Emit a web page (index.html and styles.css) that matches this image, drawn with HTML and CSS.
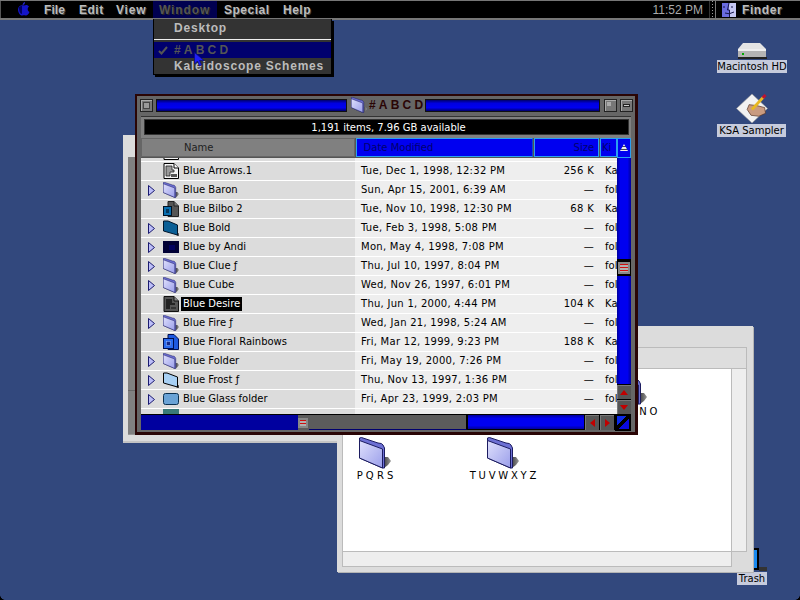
FILE: index.html
```html
<!DOCTYPE html>
<html lang="en">
<head>
<meta charset="utf-8">
<title>Mac OS Desktop</title>
<link rel="stylesheet" href="styles.css">
</head>
<body>
<svg class="defs" width="0" height="0" aria-hidden="true">
  <defs>
    <linearGradient id="fg" x1="0" y1="0" x2="1" y2="1"><stop offset="0" stop-color="#dfe0fc"/><stop offset="1" stop-color="#9a9eea"/></linearGradient>
    <linearGradient id="fs" x1="0" y1="0" x2="1" y2="0"><stop offset="0" stop-color="#444"/><stop offset="1" stop-color="#999"/></linearGradient>
    <symbol id="folder" viewBox="0 0 32 32">
      <path d="M25 20 H29 L32 24 L29 28 L25 31Z" fill="url(#fs)"/>
      <path d="M.5 1 L2.500 .5 L19 6 Q23 6 24 8 L25.500 11 V31 H23.500 L.5 21Z" fill="#6d70d4" stroke="#1c1c60"/>
      <path d="M.5 3.500 L23.500 12 V31 L.5 21Z" fill="url(#fg)" stroke="#1c1c60"/>
    </symbol>
    <symbol id="doc-light" viewBox="0 0 16 16">
      <path d="M1 .5H11L15.500 5V15.500H1Z" fill="#f4f4f4" stroke="#000"/>
      <path d="M11 .5V5H15.500" fill="#fff" stroke="#000"/>
      <path d="M3 3H9V7H11V9H7V13H3Z" fill="#9a9a9a" stroke="#222" stroke-width=".8"/>
      <path d="M8 11H14V14H8Z" fill="#555"/>
    </symbol>
    <symbol id="doc-dark" viewBox="0 0 16 16">
      <path d="M1 .5H11L15.500 5V15.500H1Z" fill="#555" stroke="#111"/>
      <path d="M11 .5V5H15.500" fill="#888" stroke="#111"/>
      <path d="M3 3H9V7H12V9H7V13H3Z" fill="#222"/>
      <path d="M8 11H13V13H8Z" fill="#333"/>
    </symbol>
    <symbol id="doc-gray-blue" viewBox="0 0 16 16">
      <path d="M5 .5H11L15.500 5V15.500H5Z" fill="#555" stroke="#222"/>
      <path d="M11 .5V5H15.500" fill="#777" stroke="#222"/>
      <rect x=".5" y="5.500" width="8" height="9" fill="#0a6fb0" stroke="#012"/>
      <rect x="3" y="8" width="3" height="4" fill="#06385e"/>
    </symbol>
    <symbol id="doc-blue" viewBox="0 0 16 16">
      <path d="M5 .5H11L15.500 5V15.500H5Z" fill="#1e5ae0" stroke="#001050"/>
      <rect x=".5" y="4.500" width="10" height="10" fill="#2b6cf0" stroke="#001050"/>
      <rect x="3.500" y="7.500" width="4" height="4" fill="#14298a" stroke="#9bbcff" stroke-width=".5"/>
    </symbol>
    <symbol id="folder-teal" viewBox="0 0 16 16">
      <path d="M13 14 L16 13 V16 H14Z" fill="#555"/>
      <path d="M.5 1 H5 L14.500 5 V15 L.5 11Z" fill="#0a5f96" stroke="#00152a"/>
    </symbol>
    <symbol id="folder-navy" viewBox="0 0 16 16">
      <rect y="2" width="16" height="12" fill="#000035"/>
      <rect x="6" y="6" width="6" height="5" fill="#000060"/>
    </symbol>
    <symbol id="folder-frost" viewBox="0 0 16 16">
      <path d="M13 14 L16 13 V16 H14Z" fill="#444"/>
      <path d="M.5 1 H4 L14.500 5 V15 L.5 11Z" fill="#a8d0f4" stroke="#000"/>
    </symbol>
    <symbol id="folder-glass" viewBox="0 0 16 16">
      <rect x=".5" y="2.500" width="15" height="11" rx="2" fill="#6aa3d6" stroke="#0a3050"/>
    </symbol>
    <symbol id="tri" viewBox="0 0 7 11">
      <path d="M.5 .5 L6.500 5.500 L.5 10.500Z" fill="#bcbef8" stroke="#1a1a70"/>
    </symbol>
  </defs>
</svg>

<div class="desktop">

  <header class="menubar">
    <svg class="apple" width="16" height="16" viewBox="0 0 16 16" aria-hidden="true">
      <path d="M9 1 C9 3 8 4 6.500 4 C7 2 8 1 9 1Z" fill="#2a2ad8"/>
      <path d="M8 4.500 C10 3.500 12 4 13 5.500 C11 7 11.500 10 13.500 11 C12.500 13.500 11 15 9.500 14.500 C8.500 14 7.500 14 6.500 14.500 C4.500 15 2 12 2 8.500 C2 5 5.500 3.500 8 4.500Z" fill="#1414c8"/>
      <path d="M3 6 C4 5 5 5 6 5 V13 C4 13 3 10 3 6Z" fill="#000060"/>
    </svg>
    <nav class="menus">
      <span class="menu">File</span>
      <span class="menu">Edit</span>
      <span class="menu">View</span>
      <span class="menu is-open">Window</span>
      <span class="menu">Special</span>
      <span class="menu">Help</span>
    </nav>
    <div class="status">
      <span class="clock">11:52 PM</span>
      <span class="grip"></span>
      <svg class="finder-icon" width="14" height="14" viewBox="0 0 14 14" aria-hidden="true">
        <rect width="14" height="14" fill="#6a6ce0"/>
        <rect x="7" width="7" height="14" fill="#c6c8f4"/>
        <path d="M7 0 L5.500 7 H7.500 V14" fill="none" stroke="#15154a"/>
        <path d="M2 3V5M10 3V5M3 10 Q7 12 12 9" fill="none" stroke="#15154a"/>
      </svg>
      <span class="app-name">Finder</span>
    </div>
  </header>

  <div class="dropdown">
    <div class="dd-item dd-first">Desktop</div>
    <div class="dd-sep"></div>
    <div class="dd-item dd-selected">
      <svg class="dd-check" width="10" height="9" viewBox="0 0 10 9" aria-hidden="true"><path d="M1 5 L3.500 7.500 L9 1" fill="none" stroke="#555" stroke-width="2"/></svg>#ABCD</div>
    <div class="dd-item dd-last">Kaleidoscope Schemes</div>
  </div>
  <svg class="cursor" width="11" height="15" viewBox="0 0 11 15" aria-hidden="true">
    <path d="M.5 .5 V12 L3.500 9 L5.500 14 L7.500 13 L5.500 8.500 H10Z" fill="#2020f4" stroke="#0a0a80" stroke-width=".7"/>
  </svg>

  <div class="desk-icon hd">
    <svg width="30" height="17" viewBox="0 0 30 17" aria-hidden="true">
      <path d="M6 0 H23 L29 6 H1Z" fill="#e4e4e4"/>
      <path d="M1 6 H29 V14 H1Z" fill="#b4b4b4"/>
      <rect x="1" y="6" width="28" height="2" fill="#efefef"/>
      <rect x="1" y="14" width="29" height="2" fill="#222"/>
      <rect x="5" y="10" width="2" height="2" fill="#0a0"/>
    </svg>
    <span class="desk-label">Macintosh HD</span>
  </div>
  <div class="desk-icon ksa">
    <svg width="34" height="31" viewBox="0 0 34 32" aria-hidden="true">
      <path d="M17 1 L33 16 L17 31 L1 16Z" fill="#f2f2f2" stroke="#999" stroke-width=".6"/>
      <path d="M12 17 L14 12 L22 13 L30 15 L31 21 L24 24 L16 23Z" fill="#c99b80" stroke="#553322" stroke-width=".7"/>
      <path d="M17 17 L29 4" stroke="#e8b820" stroke-width="3"/>
      <path d="M28 5 L31 2" stroke="#c01030" stroke-width="3"/>
    </svg>
    <span class="desk-label">KSA Sampler</span>
  </div>

  <div class="trash">
    <div class="trash-can"></div>
    <span class="desk-label">Trash</span>
  </div>

  <div class="back-left">
    <div class="back-left-pane"><div class="back-left-foot"></div></div>
  </div>

  <div class="back-window">
    <div class="bw-head"></div>
    <div class="bw-body">
      <div class="bw-content">
        <div class="bw-icon pqrs"><svg width="32" height="32" aria-hidden="true"><use href="#folder"/></svg><span>P Q R S</span></div>
        <div class="bw-icon tuv"><svg width="32" height="32" aria-hidden="true"><use href="#folder"/></svg><span>T U V W X Y Z</span></div>
        <div class="bw-icon jkl"><svg width="32" height="32" aria-hidden="true"><use href="#folder"/></svg><span>J K L M N O</span></div>
      </div>
      <div class="bw-vscroll"></div>
    </div>
    <div class="bw-foot"><div class="bw-hscroll"></div><div class="bw-corner"></div></div>
  </div>

  <main class="window">
    <div class="titlebar">
      <button class="tb-btn" aria-label="Close"><span class="tb-close"></span></button>
      <div class="tb-stripe tb-stripe-left"></div>
      <svg class="tb-folder" width="16" height="16" aria-hidden="true"><use href="#folder"/></svg>
      <span class="tb-title">#ABCD</span>
      <div class="tb-stripe"></div>
      <button class="tb-btn tb-btn-zoom" aria-label="Zoom"><span class="tb-zoom"></span></button>
      <button class="tb-btn" aria-label="Collapse"><span class="tb-collapse"></span></button>
    </div>
    <div class="frame">
      <div class="infobar"><div class="infotext">1,191 items, 7.96 GB available</div></div>
      <div class="columns">
        <div class="col col-name">Name</div>
        <div class="col col-date">Date Modified</div>
        <div class="col col-size">Size</div>
        <div class="col col-kind">Ki</div>
        <div class="col-sort"><span class="sort-arrow"></span></div>
      </div>
      <div class="list-area">
        <div class="rows">
          <div class="row row-partial"><span class="c-name"><svg class="ficon" width="16" height="16" aria-hidden="true"><use href="#doc-light"/></svg></span><span class="c-rest"></span></div>
          <div class="row"><span class="c-name"><i class="notri"></i><svg class="ficon" width="16" height="16" aria-hidden="true"><use href="#doc-light"/></svg><span class="lbl">Blue Arrows.1</span></span><span class="c-rest"><span class="c-date">Tue, Dec 1, 1998, 12:32 PM</span><span class="c-size">256 K</span><span class="c-kind">Ka</span></span></div>
          <div class="row"><span class="c-name"><svg class="tri" width="7" height="11" aria-hidden="true"><use href="#tri"/></svg><svg class="ficon" width="16" height="16" aria-hidden="true"><use href="#folder"/></svg><span class="lbl">Blue Baron</span></span><span class="c-rest"><span class="c-date">Sun, Apr 15, 2001, 6:39 AM</span><span class="c-size">—</span><span class="c-kind">fol</span></span></div>
          <div class="row"><span class="c-name"><i class="notri"></i><svg class="ficon" width="16" height="16" aria-hidden="true"><use href="#doc-gray-blue"/></svg><span class="lbl">Blue Bilbo 2</span></span><span class="c-rest"><span class="c-date">Tue, Nov 10, 1998, 12:30 PM</span><span class="c-size">68 K</span><span class="c-kind">Ka</span></span></div>
          <div class="row"><span class="c-name"><svg class="tri" width="7" height="11" aria-hidden="true"><use href="#tri"/></svg><svg class="ficon" width="16" height="16" aria-hidden="true"><use href="#folder-teal"/></svg><span class="lbl">Blue Bold</span></span><span class="c-rest"><span class="c-date">Tue, Feb 3, 1998, 5:08 PM</span><span class="c-size">—</span><span class="c-kind">fol</span></span></div>
          <div class="row"><span class="c-name"><svg class="tri" width="7" height="11" aria-hidden="true"><use href="#tri"/></svg><svg class="ficon" width="16" height="16" aria-hidden="true"><use href="#folder-navy"/></svg><span class="lbl">Blue by Andi</span></span><span class="c-rest"><span class="c-date">Mon, May 4, 1998, 7:08 PM</span><span class="c-size">—</span><span class="c-kind">fol</span></span></div>
          <div class="row"><span class="c-name"><svg class="tri" width="7" height="11" aria-hidden="true"><use href="#tri"/></svg><svg class="ficon" width="16" height="16" aria-hidden="true"><use href="#folder"/></svg><span class="lbl">Blue Clue ƒ</span></span><span class="c-rest"><span class="c-date">Thu, Jul 10, 1997, 8:04 PM</span><span class="c-size">—</span><span class="c-kind">fol</span></span></div>
          <div class="row"><span class="c-name"><svg class="tri" width="7" height="11" aria-hidden="true"><use href="#tri"/></svg><svg class="ficon" width="16" height="16" aria-hidden="true"><use href="#folder"/></svg><span class="lbl">Blue Cube</span></span><span class="c-rest"><span class="c-date">Wed, Nov 26, 1997, 6:01 PM</span><span class="c-size">—</span><span class="c-kind">fol</span></span></div>
          <div class="row"><span class="c-name"><i class="notri"></i><svg class="ficon" width="16" height="16" aria-hidden="true"><use href="#doc-dark"/></svg><span class="lbl lbl-sel">Blue Desire</span></span><span class="c-rest"><span class="c-date">Thu, Jun 1, 2000, 4:44 PM</span><span class="c-size">104 K</span><span class="c-kind">Ka</span></span></div>
          <div class="row"><span class="c-name"><svg class="tri" width="7" height="11" aria-hidden="true"><use href="#tri"/></svg><svg class="ficon" width="16" height="16" aria-hidden="true"><use href="#folder"/></svg><span class="lbl">Blue Fire ƒ</span></span><span class="c-rest"><span class="c-date">Wed, Jan 21, 1998, 5:24 AM</span><span class="c-size">—</span><span class="c-kind">fol</span></span></div>
          <div class="row"><span class="c-name"><i class="notri"></i><svg class="ficon" width="16" height="16" aria-hidden="true"><use href="#doc-blue"/></svg><span class="lbl">Blue Floral Rainbows</span></span><span class="c-rest"><span class="c-date">Fri, Mar 12, 1999, 9:23 PM</span><span class="c-size">188 K</span><span class="c-kind">Ka</span></span></div>
          <div class="row"><span class="c-name"><svg class="tri" width="7" height="11" aria-hidden="true"><use href="#tri"/></svg><svg class="ficon" width="16" height="16" aria-hidden="true"><use href="#folder"/></svg><span class="lbl">Blue Folder</span></span><span class="c-rest"><span class="c-date">Fri, May 19, 2000, 7:26 PM</span><span class="c-size">—</span><span class="c-kind">fol</span></span></div>
          <div class="row"><span class="c-name"><svg class="tri" width="7" height="11" aria-hidden="true"><use href="#tri"/></svg><svg class="ficon" width="16" height="16" aria-hidden="true"><use href="#folder-frost"/></svg><span class="lbl">Blue Frost ƒ</span></span><span class="c-rest"><span class="c-date">Thu, Nov 13, 1997, 1:36 PM</span><span class="c-size">—</span><span class="c-kind">fol</span></span></div>
          <div class="row"><span class="c-name"><svg class="tri" width="7" height="11" aria-hidden="true"><use href="#tri"/></svg><svg class="ficon" width="16" height="16" aria-hidden="true"><use href="#folder-glass"/></svg><span class="lbl">Blue Glass folder</span></span><span class="c-rest"><span class="c-date">Fri, Apr 23, 1999, 2:03 PM</span><span class="c-size">—</span><span class="c-kind">fol</span></span></div>
          <div class="row row-end"><span class="c-name"><i class="notri"></i><span class="end-icon"></span></span><span class="c-rest"></span></div>
        </div>
        <div class="vscroll">
          <div class="v-track v-track-top"></div>
          <div class="thumb"><span class="thumb-lines"></span></div>
          <div class="v-track v-track-bottom"></div>
          <div class="v-btn"><span class="arr arr-up"></span></div>
          <div class="v-btn"><span class="arr arr-down"></span></div>
        </div>
      </div>
      <div class="hscrollbar">
        <div class="h-fill"></div>
        <div class="h-thumb"><span class="thumb-lines"></span></div>
        <div class="h-gray"></div>
        <div class="h-blue"></div>
        <div class="h-btn"><span class="arr arr-left"></span></div>
        <div class="h-btn"><span class="arr arr-right"></span></div>
        <div class="grow"></div>
      </div>
    </div>
  </main>
  <span class="corner corner-left"></span>
  <span class="corner corner-right"></span>
</div>
</body>
</html>
```
FILE: styles.css
```css
* { box-sizing: border-box; }
html, body { margin: 0; padding: 0; }
body { width: 800px; height: 600px; overflow: hidden; }
.defs { position: absolute; }
.desktop {
  position: relative; width: 800px; height: 600px; overflow: hidden;
  background: #32487d;
  font-family: "DejaVu Sans", sans-serif;
  font-size: 10px; color: #000;
}
.corner { position: absolute; bottom: 0; width: 5px; height: 5px; }
.corner-left { left: 0; background: radial-gradient(circle at 100% 0, transparent 4.500px, #000 5px); }
.corner-right { right: 0; background: radial-gradient(circle at 0 0, transparent 4.500px, #000 5px); }

/* menu bar */
.menubar {
  height: 20px; display: flex; align-items: center; background: #000;
  border-top: 1px solid #777; border-bottom: 2px solid #777;
  box-shadow: inset 1px 0 0 #555;
}
.apple { margin-left: 16px; margin-top: -1px; }
.menus { display: flex; margin-left: 4px; height: 17px; }
.menu {
  height: 17px;
  font: bold 12px/18px "Liberation Sans", sans-serif; color: #bdbdbd;
  letter-spacing: .5px;
  text-shadow: 1px 1px 0 #444;
}
.menu:nth-child(1) { width: 35px; padding-left: 8px; letter-spacing: .1px; }
.menu:nth-child(2) { width: 38px; padding-left: 8px; }
.menu:nth-child(3) { width: 44px; padding-left: 7px; letter-spacing: .8px; }
.menu:nth-child(4) { width: 64px; padding-left: 6px; letter-spacing: .9px; }
.menu:nth-child(5) { width: 59px; padding-left: 7px; }
.menu:nth-child(6) { width: 40px; padding-left: 7px; }
.menu.is-open { background: #000050; color: #555; text-shadow: 1px 1px 0 #222; }
.status { margin-left: auto; display: flex; align-items: center; height: 17px; padding-right: 11px; }
.clock { color: #aaa; font: 12px "Liberation Sans", sans-serif; letter-spacing: 0; margin-right: 6px; }
.grip { width: 7px; height: 17px; border-right: 1px solid #777; border-left: 1px solid #333; margin-right: 6px;
  background: repeating-linear-gradient(to bottom, #999 0 1px, #000 1px 3px) center / 1px 100% no-repeat; }
.finder-icon { margin-right: 6px; }
.app-name { font: bold 12px "Liberation Sans", sans-serif; letter-spacing: .6px; color: #bdbdbd; width: 47px; text-shadow: 1px 1px 0 #444; }

/* dropdown */
.dropdown {
  position: absolute; left: 153px; top: 19px; width: 179px; height: 56px;
  background: #333; border: 1px solid #000; border-top: 0;
  box-shadow: 2px 2px 0 #000;
  font: bold 12px "Liberation Sans", sans-serif; color: #bcbcbc;
  letter-spacing: .8px;
  display: flex; flex-direction: column;
}
.dd-item { padding-left: 20px; position: relative; }
.dd-first { height: 20px; line-height: 18px; }
.dd-sep { height: 1px; background: #eee; }
.dd-selected { margin-top: 2px; height: 16px; line-height: 16px; background: #00006e; color: #555; letter-spacing: 3.200px; }
.dd-check { position: absolute; left: 4px; top: 4px; }
.dd-last { height: 16px; line-height: 16px; }
.cursor { position: absolute; left: 194px; top: 52px; z-index: 5; }

/* desktop icons */
.desk-icon, .trash { position: absolute; display: flex; flex-direction: column; align-items: center; }
.desk-label {
  background: #c6cbdc; font-size: 10px; line-height: 13px; height: 13px; padding: 0 2px; white-space: nowrap; letter-spacing: 0;
}
.hd { left: 717px; top: 43px; width: 70px; }
.hd .desk-label { padding: 0; }
.ksa { left: 718px; top: 93px; width: 67px; }
.trash { left: 736px; top: 548px; width: 32px; gap: 2px; }
.trash .desk-label { padding: 0 2px; }
.trash-can { width: 18px; height: 22px; margin-left: -4px; background: #1a8af0; border: 2px solid #000; position: relative; }
.trash-can::after { content: ""; position: absolute; left: 16px; top: 17px; width: 8px; height: 4px; background: #333; }

/* background windows */
.back-left {
  position: absolute; left: 123px; top: 135px; width: 216px; height: 308px;
  background: #dcdcdc; border-bottom: 2px solid #c4c4c4; padding: 22px 0 6px 5px;
}
.back-left-pane { height: 100%; background: #808080; border-bottom: 1px solid #999; display: flex; flex-direction: column; justify-content: flex-end; }
.back-left-foot { height: 44px; border-top: 1px solid #666; }
.back-window {
  position: absolute; left: 337px; top: 326px; width: 416px; height: 246px;
  background: #dcdcdc; box-shadow: 1px 1px 0 #b4b4b4;
  padding: 21px 6px 5px 5px;
  display: flex; flex-direction: column;
}
.bw-head { height: 21px; background: #dedede; border: 1px solid #bbb; border-bottom: 0; flex: none; }
.bw-body { flex: 1; display: flex; border: 1px solid #bbb; border-bottom: 0; min-height: 0; }
.bw-content { flex: 1; background: #fff; position: relative; border-right: 1px solid #bbb; }
.bw-vscroll { width: 14px; background: #eee; }
.bw-foot { height: 16px; display: flex; border-top: 1px solid #bbb; border-left: 1px solid #bbb; flex: none; }
.bw-hscroll { width: 389px; background: #eee; border-bottom: 1px solid #bbb; border-right: 1px solid #bbb; }
.bw-corner { flex: 1; }
.bw-icon { position: absolute; display: flex; flex-direction: column; align-items: center; width: 80px; font-size: 10px; gap: 1px; white-space: nowrap; }
.pqrs { left: -8px; top: 68px; }
.tuv  { left: 120px; top: 68px; word-spacing: -.4px; }
.jkl  { left: 248px; top: 4px; word-spacing: -.4px; }

/* main window */
.window {
  position: absolute; left: 135px; top: 94px; width: 503px; height: 341px;
  background: #666; border: solid #2a0505; border-width: 2px 3px 3px 2px;
  padding: 0 4px 3px 4px; display: flex; flex-direction: column;
}
.titlebar { height: 20px; display: flex; align-items: center; gap: 3px; padding-bottom: 2px; margin: 0 -2px 0 -1px; flex: none; }
.tb-btn {
  width: 13px; height: 13px; padding: 2px; border: 1px solid #222; background: #777; display: flex; flex: none;
  box-shadow: inset 1px 1px 0 #aaa;
}
.tb-btn-zoom { margin-left: 1px; }
.tb-close { flex: 1; background: #999; border: 1px solid #444; }
.tb-zoom { flex: 1; background: #aaa; border-right: 3px solid #777; border-bottom: 3px solid #777; }
.tb-collapse { flex: 1; margin: 2px 0; background: #ccc; border: 1px solid #222; }
.tb-stripe {
  flex: 1; height: 13px; border: 1px solid #111;
  background: linear-gradient(to bottom, #00006b, #0000e0 30%, #0000f0 70%, #00006b);
}
.tb-stripe-left { flex: none; width: 191px; }
.tb-folder { margin-left: 1px; flex: none; }
.tb-title { font: bold 12px "Liberation Sans", sans-serif; color: #2a0505; letter-spacing: 3.200px; white-space: nowrap; margin: 0 -4px 0 -1px; }
.frame { flex: 1; display: flex; flex-direction: column; min-height: 0; background: #666; border-top: 1px solid #333; }
.infobar { height: 21px; padding: 2px 2px 3px 3px; background: #808080; flex: none; }
.infotext { height: 16px; background: #000; color: #fff; text-align: center; line-height: 15px; border: 1px solid #333; padding-left: 4px; }
.columns { height: 20px; display: flex; flex: none; gap: 1px; background: #555; }
.col { height: 19px; line-height: 18px; padding: 0 5px; white-space: nowrap; overflow: hidden; }
.col-name { width: 214px; background: #808080; padding-left: 42px; color: #222; border: 1px solid #666; }
.col-date { width: 178px; background: #0000f0; color: #00006e; padding-left: 7px; border: 1px solid #2aa0f0; border-right-color: #1050c0; }
.col-size { width: 65px; background: #0000f0; color: #00006e; text-align: right; padding-right: 4px; border: 1px solid #2aa0f0; }
.col-kind { width: 17px; background: #0000f0; color: #00006e; padding: 0 0 0 1px; border: 1px solid #2aa0f0; }
.col-sort { width: 14px; background: #0000f0; border: 1px solid #2aa0f0; display: flex; justify-content: center; padding-top: 5px; margin-left: -1px; }
.sort-arrow { width: 8px; height: 7px; background: repeating-linear-gradient(to bottom, #eee 0 2px, #445 2px 3px); clip-path: polygon(50% 0, 100% 100%, 0 100%); }
.list-area { height: 256px; display: flex; flex: none; min-height: 0; }
.rows { flex: 1; min-width: 0; overflow: hidden; display: flex; flex-direction: column; background: #fff; }
.row { flex: none; height: 19px; display: flex; border-bottom: 1px solid #fff; }
.row-partial { height: 4px; overflow: hidden; }
.row-partial .ficon { margin-top: -14px; margin-left: 15px; }
.row-partial .c-name { align-items: flex-start; }
.row-end { height: 5px; border: 0; overflow: hidden; }
.c-name { width: 214px; background: #dcdcdc; display: flex; align-items: center; padding-left: 7px; flex: none; }
.c-rest { flex: 1; min-width: 0; background: #eee; display: flex; align-items: center; overflow: hidden; white-space: nowrap; padding-bottom: 1px; line-height: 14px; }
.tri { flex: none; }
.notri { width: 7px; flex: none; }
.ficon { margin-left: 8px; flex: none; }
.lbl { margin-left: 2px; padding: 0 2px; line-height: 14px; white-space: nowrap; }
.lbl-sel { background: #000; color: #fff; }
.end-icon { width: 16px; height: 5px; background: #3a7a78; margin-left: 8px; align-self: flex-start; }
.c-date { width: 175px; padding-left: 6px; flex: none; letter-spacing: .27px; }
.c-size { width: 64px; text-align: right; flex: none; letter-spacing: .3px; }
.c-kind { margin-left: 11px; flex: none; }

/* scrollbars */
.vscroll { width: 14px; flex: none; background: #000; display: flex; flex-direction: column; }
.v-track { background: linear-gradient(to right, #00009a, #0000f0 25%, #0000f0 75%, #00009a); }
.v-track-top { height: 101px; }
.v-track-bottom { flex: 1; }
.thumb { background: #000; height: 17px; flex: none; padding: 3px 1px 2px; display: flex; }
.thumb .thumb-lines { flex: 1; height: auto; }
.thumb-lines { display: block; width: 10px; height: 10px; border: 2px solid #888; background: repeating-linear-gradient(to bottom, #d01010 0 1px, #b0b0b0 1px 3px); }
.v-btn { height: 14px; margin-top: 1px; flex: none; background: #555; display: flex; align-items: center; justify-content: center; box-shadow: inset 1px 1px 0 #777; }
.arr { width: 0; height: 0; border: 4px solid transparent; }
.arr-up { border-bottom: 5px solid #c00000; border-top: 0; }
.arr-down { border-top: 5px solid #c00000; border-bottom: 0; }
.arr-left { border-right: 5px solid #c00000; border-left: 0; }
.arr-right { border-left: 5px solid #c00000; border-right: 0; }
.hscrollbar { height: 16px; flex: none; display: flex; background: #000; border-top: 1px solid #000; }
.h-fill { width: 158px; background: #00009f; }
.h-thumb { width: 11px; background: #5c5c5c; display: flex; align-items: center; }
.h-gray { width: 158px; background: #5c5c5c; border-right: 1px solid #000; border-bottom: 1px solid #00006e; }
.h-blue { width: 117px; background: linear-gradient(to bottom, #00009a, #0000f0 25%, #0000f0 75%, #00009a); margin: 0 1px; border-bottom: 1px solid #000; }
.h-btn { width: 14px; flex: none; margin-right: 1px; background: #555; display: flex; align-items: center; justify-content: center; box-shadow: inset 1px 1px 0 #777; }
.grow { width: 16px; height: 17px; flex: none; margin-top: -1px; background: linear-gradient(135deg, #0a2ae8 0 38%, #000 38% 58%, #0a0adf 58%); border: 2px solid #000; }
```
